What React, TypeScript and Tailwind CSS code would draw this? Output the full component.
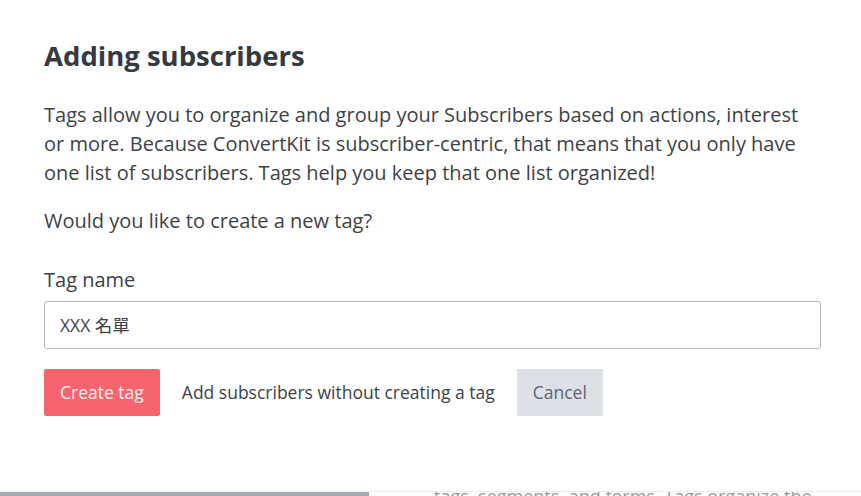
export default function App() {
  return (
    <div
      className="w-[861px] h-[496px] bg-white overflow-hidden flex flex-col"
      style={{ fontFamily: '"Open Sans", "Noto Sans CJK TC", sans-serif' }}
    >
      <div className="h-[491px] px-[44px] pt-[39px]">
        <h1 className="text-[27.5px] leading-[34px] font-bold text-[#343a40]">Adding subscribers</h1>

        <p className="mt-[27px] text-[20px] leading-[29px] text-[#3d4247] pr-[10px]">
          Tags allow you to organize and group your Subscribers based on actions, interest or more. Because
          ConvertKit is subscriber-centric, that means that you only have one list of subscribers. Tags help you
          keep that one list organized!
        </p>

        <p className="mt-[19px] text-[20px] leading-[29px] text-[#3d4247]">Would you like to create a new tag?</p>

        <label className="block mt-[30px] text-[20px] leading-[29px] text-[#3d4247]">Tag name</label>
        <div className="mt-[7px] w-[777px] h-[48px] border border-[#b8b8b8] rounded-[3px] px-[15px] flex items-center text-[17.5px] text-[#3d4247]">
          XXX 名單
        </div>

        <div className="mt-[20px] flex items-center h-[47px]">
          <button className="h-full px-[16px] bg-[#f6656d] text-[#fdf0f0] text-[17.5px] rounded-[2px]">
            Create tag
          </button>
          <button className="h-full px-[22px] text-[17.5px] text-[#3d4247]">
            Add subscribers without creating a tag
          </button>
          <button className="h-full px-[16px] bg-[#dde1e6] text-[#5d6570] text-[17.5px]">Cancel</button>
        </div>
      </div>

      <div className="h-px bg-[#ececec]" />
      <div className="h-[4px] flex overflow-hidden">
        <div className="w-[369px] bg-[#a6a9ae]" />
        <div className="ml-[65px] text-[18px] leading-[8px] text-[#9a9a9a] whitespace-nowrap">
          tags, segments, and forms. Tags organize the
        </div>
      </div>
    </div>
  )
}
